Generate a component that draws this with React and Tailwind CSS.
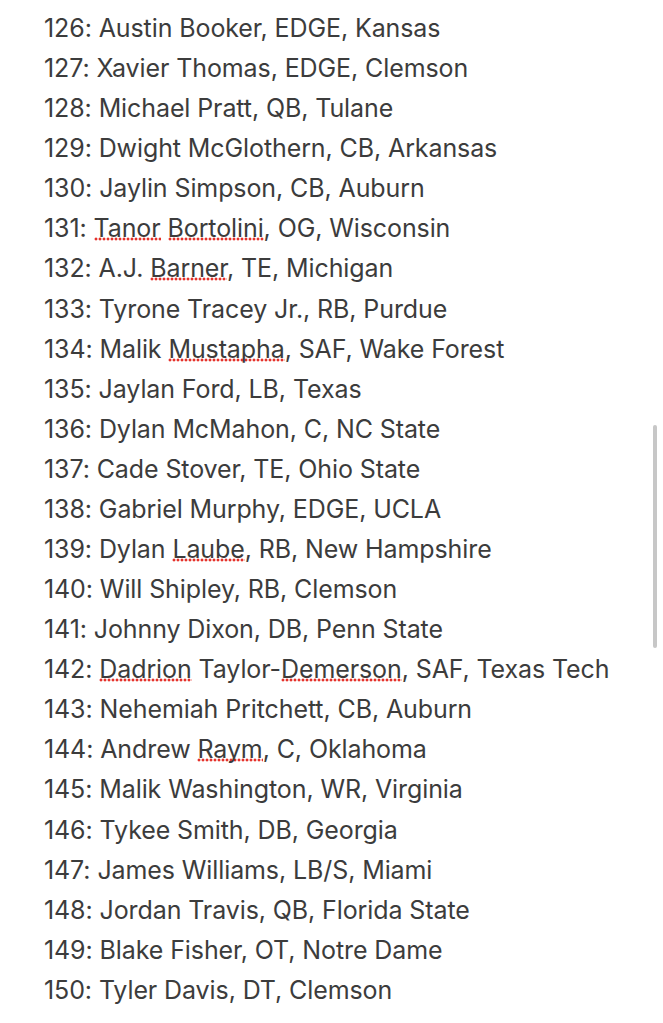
const picks = [
  ['126', [['Austin Booker, EDGE, Kansas']]],
  ['127', [['Xavier Thomas, EDGE, Clemson']]],
  ['128', [['Michael Pratt, QB, Tulane']]],
  ['129', [['Dwight McGlothern, CB, Arkansas']]],
  ['130', [['Jaylin Simpson, CB, Auburn']]],
  ['131', [['Tanor', true], [' '], ['Bortolini', true], [', OG, Wisconsin']]],
  ['132', [['A.J. '], ['Barner', true], [', TE, Michigan']]],
  ['133', [['Tyrone Tracey Jr., RB, Purdue']]],
  ['134', [['Malik '], ['Mustapha', true], [', SAF, Wake Forest']]],
  ['135', [['Jaylan Ford, LB, Texas']]],
  ['136', [['Dylan McMahon, C, NC State']]],
  ['137', [['Cade Stover, TE, Ohio State']]],
  ['138', [['Gabriel Murphy, EDGE, UCLA']]],
  ['139', [['Dylan '], ['Laube', true], [', RB, New Hampshire']]],
  ['140', [['Will Shipley, RB, Clemson']]],
  ['141', [['Johnny Dixon, DB, Penn State']]],
  ['142', [['Dadrion', true], [' Taylor-'], ['Demerson', true], [', SAF, Texas Tech']]],
  ['143', [['Nehemiah Pritchett, CB, Auburn']]],
  ['144', [['Andrew '], ['Raym', true], [', C, Oklahoma']]],
  ['145', [['Malik Washington, WR, Virginia']]],
  ['146', [['Tykee Smith, DB, Georgia']]],
  ['147', [['James Williams, LB/S, Miami']]],
  ['148', [['Jordan Travis, QB, Florida State']]],
  ['149', [['Blake Fisher, OT, Notre Dame']]],
  ['150', [['Tyler Davis, DT, Clemson']]],
];

export default function App() {
  return (
    <div className="relative w-[663px] h-[1023px] bg-white overflow-hidden">
      <div className="pt-[8px] pl-[44px] text-[25px] leading-[40.08px] text-[#3c3c3c] font-['Inter',sans-serif] tracking-[-0.1px]">
        {picks.map(([num, parts]) => (
          <div key={num} className="whitespace-nowrap">
            {num}:{' '}
            {parts.map(([txt, misspelt], i) =>
              misspelt ? (
                // spellcheck dots
                <span key={i} className="bg-[radial-gradient(circle,#e5322b_1.3px,transparent_1.7px)] bg-[length:4px_4px] bg-repeat-x bg-[position:0_calc(100%-2px)]">{txt}</span>
              ) : (
                <span key={i}>{txt}</span>
              )
            )}
          </div>
        ))}
      </div>
      {/* scroll indicator */}
      <div className="absolute left-[653px] top-[425px] w-[4px] h-[223px] rounded-full bg-[#c7c7c7]" />
    </div>
  );
}
